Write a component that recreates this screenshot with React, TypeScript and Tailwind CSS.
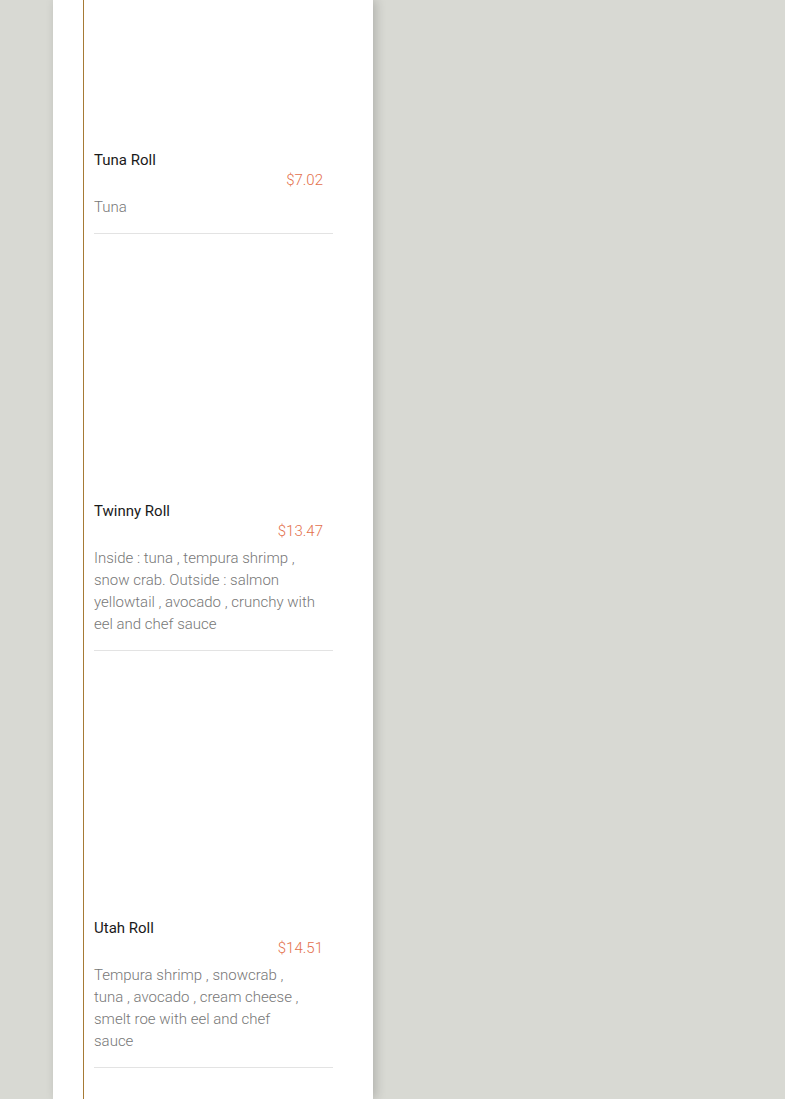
import React from "react";

type Item = { name: string; price: string; desc: React.ReactNode; img: number };

const items: Item[] = [
  { name: "Tuna Roll", price: "$7.02", desc: "Tuna", img: 150 },
  {
    name: "Twinny Roll",
    price: "$13.47",
    desc: "Inside : tuna , tempura shrimp , snow crab. Outside : salmon yellowtail , avocado , crunchy with eel and chef sauce",
    img: 267,
  },
  {
    name: "Utah Roll",
    price: "$14.51",
    desc: (
      <>
        Tempura shrimp , snowcrab , tuna , avocado , cream cheese , smelt roe with eel and chef
        <br />
        sauce
      </>
    ),
    img: 267,
  },
];

export default function App() {
  return (
    <div
      className="h-[1099px] w-[785px] overflow-hidden bg-[#d8d9d3] flex"
      style={{ fontFamily: "Roboto, 'Noto Sans', sans-serif" }}
    >
      <div className="ml-[53px] w-[320px] h-full bg-white shadow-[3px_0_10px_rgba(0,0,0,0.18)] flex">
        <div className="ml-[30px] w-px h-full bg-[#a67a35]" />
        <div className="ml-[10px] w-[239px] flex flex-col">
          {items.map((it, i) => (
            <div key={i} className="border-b border-[#e3e3e3] pb-[15px]">
              <div style={{ height: it.img }} />
              <div className="text-[15px] leading-[20px] text-[#1a1a1a] font-normal">{it.name}</div>
              <div className="text-[15px] leading-[20px] text-[#e3704c] font-light text-right pr-[10px]">
                {it.price}
              </div>
              <div className="mt-[6px] w-[221px] text-[15px] leading-[22px] text-[#777] font-light">
                {it.desc}
              </div>
            </div>
          ))}
        </div>
      </div>
    </div>
  );
}
